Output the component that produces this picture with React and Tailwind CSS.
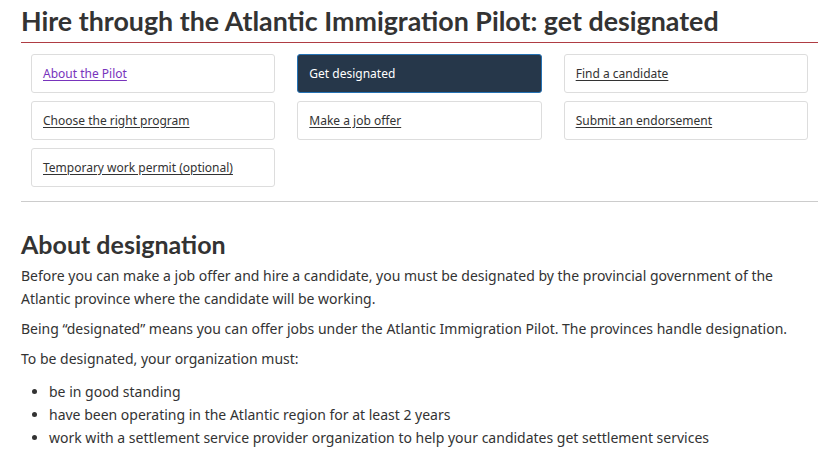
export default function App() {
  const cards = [
    { t: "About the Pilot", c: "text-[#7834bc]" },
    { t: "Get designated", active: true },
    { t: "Find a candidate", c: "text-[#333]" },
    { t: "Choose the right program", c: "text-[#333]" },
    { t: "Make a job offer", c: "text-[#333]" },
    { t: "Submit an endorsement", c: "text-[#333]" },
    { t: "Temporary work permit (optional)", c: "text-[#333]" },
  ];
  return (
    <div className="w-[832px] h-[458px] overflow-hidden bg-white px-[21px] pr-[14px] text-[#333]" style={{ fontFamily: '"Noto Sans", sans-serif' }}>
      <h1 className="pt-[5px] pb-[5px] text-[26.8px] leading-[32px] font-bold text-[#333] border-b border-[#af3c43]" style={{ fontFamily: 'Lato, sans-serif' }}>
        Hire through the Atlantic Immigration Pilot: get designated
      </h1>
      <div className="grid grid-cols-3 gap-x-[22px] gap-y-[8px] px-[10px] pt-[11px] pb-[14px] border-b border-[#ccc]">
        {cards.map((c) =>
          c.active ? (
            <div key={c.t} className="h-[39px] flex items-center px-[11px] rounded-[3px] bg-[#26374a] border border-[#2572b4] text-white text-[12px]">
              {c.t}
            </div>
          ) : (
            <div key={c.t} className="h-[39px] flex items-center px-[11px] rounded-[3px] border border-[#ddd]">
              <a href="#" className={`${c.c} underline underline-offset-2 text-[12px]`}>{c.t}</a>
            </div>
          )
        )}
      </div>
      <h2 className="mt-[26px] text-[25px] leading-[32px] font-bold text-[#333]" style={{ fontFamily: 'Lato, sans-serif' }}>
        About designation
      </h2>
      <div className="text-[14px] leading-[23px] pr-[30px]">
        <p className="mt-[4px]">Before you can make a job offer and hire a candidate, you must be designated by the provincial government of the Atlantic province where the candidate will be working.</p>
        <p className="mt-[7px]">Being “designated” means you can offer jobs under the Atlantic Immigration Pilot. The provinces handle designation.</p>
        <p className="mt-[7px]">To be designated, your organization must:</p>
        <ul className="mt-[10px] list-disc pl-[28px]">
          <li>be in good standing</li>
          <li>have been operating in the Atlantic region for at least 2 years</li>
          <li>work with a settlement service provider organization to help your candidates get settlement services</li>
        </ul>
      </div>
    </div>
  );
}
